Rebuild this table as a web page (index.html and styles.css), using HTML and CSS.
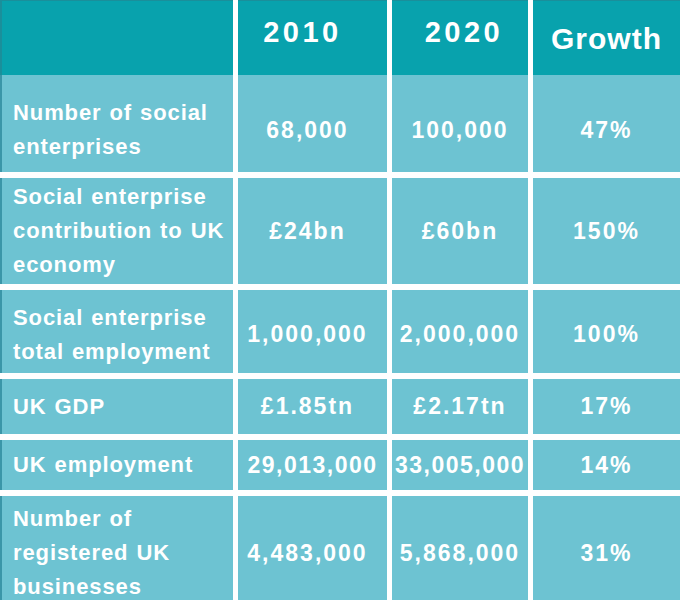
FILE: index.html
```html
<!DOCTYPE html>
<html lang="en">
<head>
<meta charset="utf-8">
<title>Social enterprise growth</title>
<link rel="stylesheet" href="styles.css">
</head>
<body>
<div class="table">
  <div class="head">
    <div class="hcell first"></div>
    <div class="hcell year y2010">2010</div>
    <div class="hcell year y2020">2020</div>
    <div class="hcell growth">Growth</div>
  </div>
  <div class="body">
    <div class="cell label first r1">Number of social enterprises</div>
    <div class="cell val c2 r1">68,000</div>
    <div class="cell val c3 r1">100,000</div>
    <div class="cell val c4 r1">47%</div>

    <div class="cell label first">Social enterprise contribution to UK economy</div>
    <div class="cell val c2">£24bn</div>
    <div class="cell val c3">£60bn</div>
    <div class="cell val c4">150%</div>

    <div class="cell label first r3">Social enterprise total employment</div>
    <div class="cell val c2 r3">1,000,000</div>
    <div class="cell val c3 r3">2,000,000</div>
    <div class="cell val c4 r3">100%</div>

    <div class="cell label first">UK GDP</div>
    <div class="cell val c2">£1.85tn</div>
    <div class="cell val c3">£2.17tn</div>
    <div class="cell val c4">17%</div>

    <div class="cell label first">UK employment</div>
    <div class="cell val c2 tight">29,013,000</div>
    <div class="cell val c3 tight">33,005,000</div>
    <div class="cell val c4">14%</div>

    <div class="cell label first">Number of registered UK businesses</div>
    <div class="cell val c2">4,483,000</div>
    <div class="cell val c3">5,868,000</div>
    <div class="cell val c4">31%</div>
  </div>
</div>
</body>
</html>
```

FILE: styles.css
```css
html, body {
  margin: 0;
  padding: 0;
  background: #ffffff;
}

body {
  font-family: "Liberation Sans", Arial, sans-serif;
  font-weight: bold;
  color: #ffffff;
}

.table {
  width: 680px;
  display: flex;
  flex-direction: column;
}

.head,
.body {
  display: grid;
  grid-template-columns: 233px 149px 136px 147px;
  column-gap: 5px;
}

.head {
  height: 75px;
}

.body {
  row-gap: 6px;
  grid-template-rows: 97px 106px 83px 55px 50px 114px;
}

.hcell {
  background: #08a2ad;
  box-shadow: inset 0 1px 0 #1a8f9b;
  display: flex;
  align-items: center;
  justify-content: center;
  box-sizing: border-box;
}

.hcell.first {
  box-shadow: inset 2px 1px 0 #1a8f9b;
}

.year {
  font-size: 29px;
  letter-spacing: 3.5px;
  padding-bottom: 10px;
}

.y2010 {
  padding-right: 20px;
}

.y2020 {
  padding-left: 8px;
}

.growth {
  font-size: 30px;
  letter-spacing: 1px;
  padding-top: 3px;
}

.cell {
  background: #6dc3d2;
  display: flex;
  align-items: center;
  box-sizing: border-box;
}

.label {
  font-size: 22px;
  line-height: 34px;
  letter-spacing: 0.9px;
  word-spacing: 1px;
  padding-left: 13px;
  padding-right: 6px;
}

.first {
  box-shadow: inset 2px 0 0 #3a96a8;
}

.val {
  font-size: 23px;
  letter-spacing: 2px;
  justify-content: center;
}

.c2 {
  padding-right: 10px;
}

.tight {
  letter-spacing: 1.5px;
  padding-right: 0;
}

.r1 {
  padding-top: 13px;
}

.r3 {
  padding-top: 6px;
}
```
